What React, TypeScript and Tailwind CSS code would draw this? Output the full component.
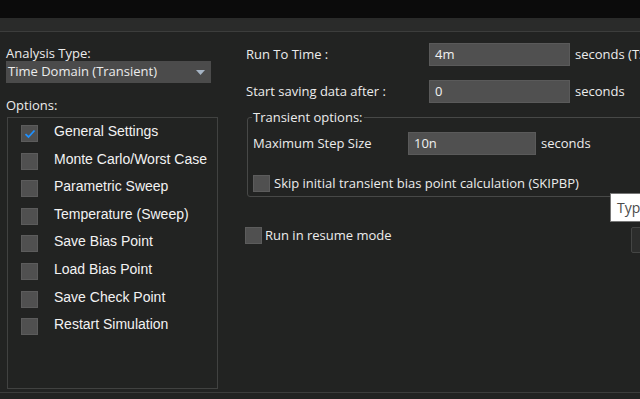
import React from "react";

const OPTIONS = [
  { label: "General Settings", checked: true },
  { label: "Monte Carlo/Worst Case", checked: false },
  { label: "Parametric Sweep", checked: false },
  { label: "Temperature (Sweep)", checked: false },
  { label: "Save Bias Point", checked: false },
  { label: "Load Bias Point", checked: false },
  { label: "Save Check Point", checked: false },
  { label: "Restart Simulation", checked: false },
];

const ui = "font-['Open_Sans','Noto_Sans',sans-serif]";

function Box({ checked = false }: { checked?: boolean }) {
  return (
    <div className="w-[17px] h-[17px] shrink-0 bg-[#505050] border border-[#5c5c5c] flex items-center justify-center">
      {checked && (
        <svg width="12" height="10" viewBox="0 0 12 10">
          <path d="M1.5 5.2 L4.5 8 L10.5 1.5" fill="none" stroke="#1e90ff" strokeWidth="1.8" />
        </svg>
      )}
    </div>
  );
}

function Field({ value, w }: { value: string; w: string }) {
  return (
    <div className={`${w} h-[23px] bg-[#505050] border border-[#5a5a5a] flex items-center pl-[5px] text-[13px] text-[#f0f0f0]`}>
      {value}
    </div>
  );
}

export default function App() {
  return (
    <div className={`w-[640px] h-[399px] overflow-hidden bg-[#222322] text-[#ececec] ${ui} relative`}>
      <div className="h-[18px] bg-[#0b0b0b]" />
      <div className="h-[14px] bg-[#2a2b2a] border-b border-[#3c3d3c]" />

      <div className="flex h-[361px] border-b border-[#3c3d3c]">
        {/* left column */}
        <div className="w-[219px] shrink-0 pl-[6px] pt-[13px]">
          <div className="text-[13px] leading-[16px]">Analysis Type:</div>
          <div className="w-[205px] h-[22px] bg-[#4b4b4b] flex items-center justify-between pl-[2px] pr-[6px] text-[13px]">
            <span>Time Domain (Transient)</span>
            <svg width="9" height="5" viewBox="0 0 9 5">
              <path d="M0 0 H9 L4.5 5 Z" fill="#a6b4c4" />
            </svg>
          </div>
          <div className="mt-[14px] text-[13px] leading-[16px]">Options:</div>
          <div className="mt-[4px] ml-[1px] w-[211px] h-[272px] border border-[#414241] pt-[7px] pl-[13px] font-['Liberation_Sans',Arial,sans-serif] text-[14px]">
            {OPTIONS.map((o) => (
              <div key={o.label} className="h-[27.6px] flex items-start gap-[16px]">
                <Box checked={o.checked} />
                <span className="leading-[16px] -mt-[2px] text-[#f2f2f2]">{o.label}</span>
              </div>
            ))}
          </div>
        </div>

        {/* right column */}
        <div className="flex-1 pl-[27px] pt-[11px] text-[13px]">
          <div className="flex items-center h-[23px]">
            <span className="w-[183px]">Run To Time :</span>
            <Field value="4m" w="w-[141px]" />
            <span className="ml-[5px] whitespace-nowrap">seconds (TSTOP)</span>
          </div>
          <div className="flex items-center h-[23px] mt-[14px]">
            <span className="w-[183px]">Start saving data after :</span>
            <Field value="0" w="w-[141px]" />
            <span className="ml-[5px]">seconds</span>
          </div>

          <div className="relative mt-[14px] ml-[1px] mr-[-20px] h-[80px] border border-[#474847] rounded-[3px] pl-[5px] pt-[14px]">
            <span className="absolute -top-[9px] left-[4px] bg-[#222322] px-[1px] leading-[16px]">Transient options:</span>
            <div className="flex items-center h-[23px]">
              <span className="w-[155px]">Maximum Step Size</span>
              <Field value="10n" w="w-[128px]" />
              <span className="ml-[5px]">seconds</span>
            </div>
            <div className="flex items-center gap-[4px] mt-[19px]">
              <Box />
              <span>Skip initial transient bias point calculation (SKIPBP)</span>
            </div>
          </div>

          <div className="flex items-center gap-[3px] mt-[29px] -ml-[1px]">
            <Box />
            <span>Run in resume mode</span>
          </div>
        </div>
      </div>

      {/* tooltip */}
      <div className="absolute left-[610px] top-[193px] w-[40px] h-[29px] bg-white border border-[#767676] pl-[6px] flex items-center text-[14px] text-[#4a4a4a]">
        Typ
      </div>
      <div className="absolute left-[631px] top-[227px] w-[20px] h-[26px] bg-[#2c2d2c] border border-[#444544] rounded-[2px]" />
    </div>
  );
}
